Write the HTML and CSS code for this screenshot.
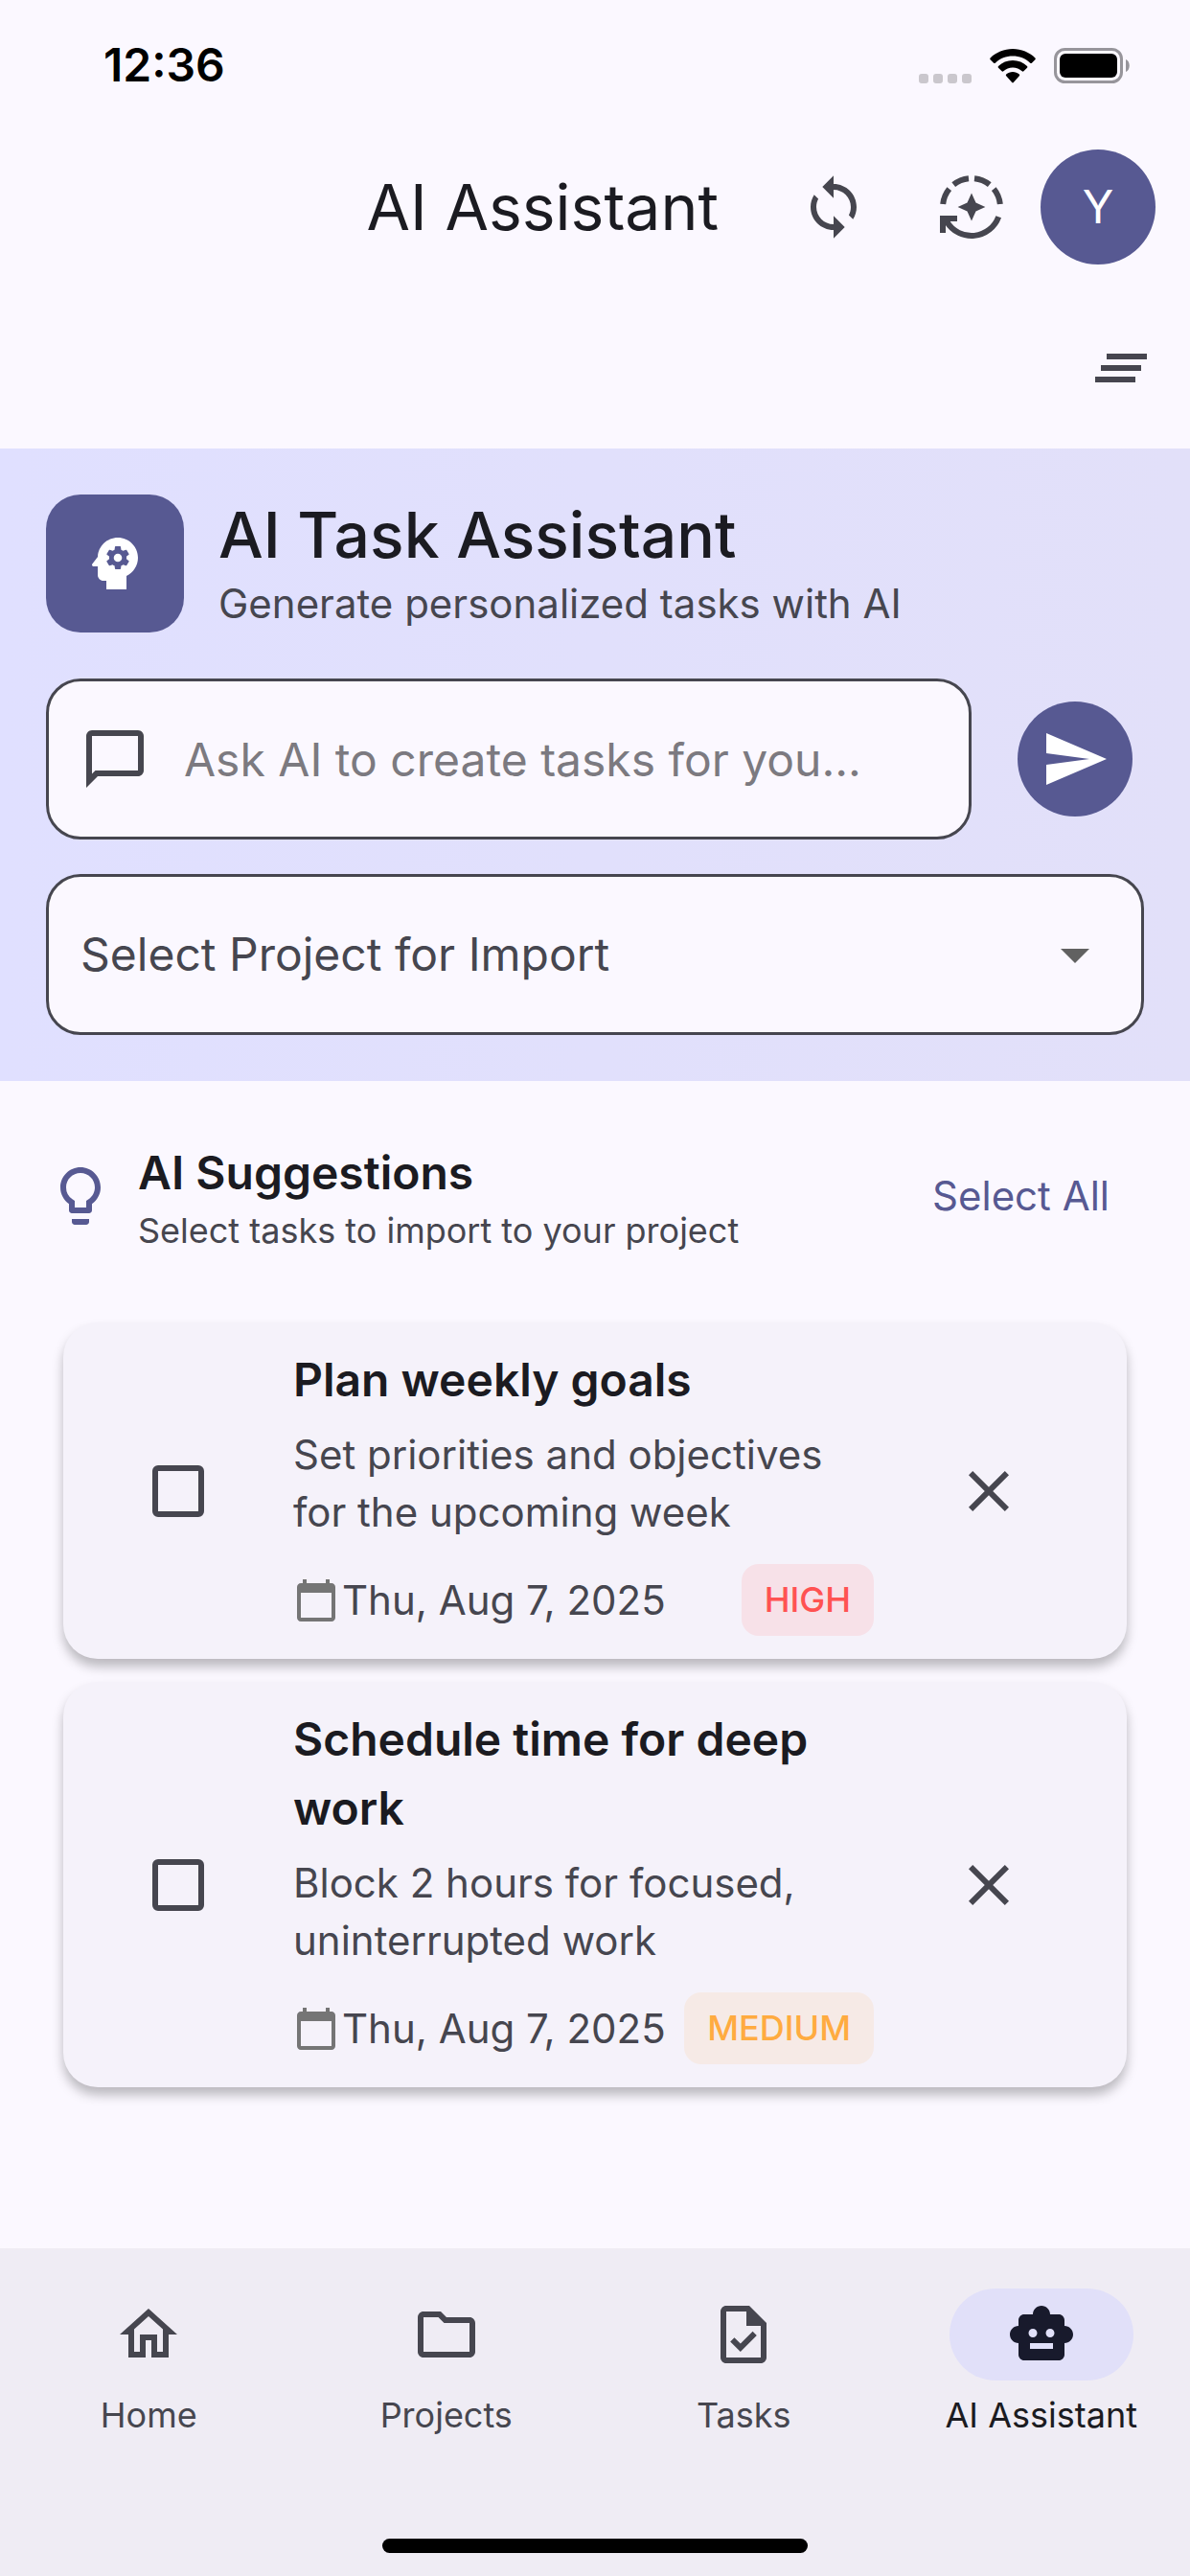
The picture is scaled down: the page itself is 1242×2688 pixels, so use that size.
FILE: index.html
```html
<!DOCTYPE html>
<html lang="en">
<head>
<meta charset="utf-8">
<meta name="viewport" content="width=device-width, initial-scale=1">
<title>AI Assistant</title>
<link rel="stylesheet" href="styles.css">
</head>
<body>
<div class="status-bar">
  <time class="status-time">12:36</time>
  <div class="status-icons">
    <span class="signal"><i></i><i></i><i></i><i></i></span>
    <svg class="wifi" viewBox="0 0 48 36" aria-hidden="true">
      <path d="M24 0C33 0 41.500 3.600 47.400 9.400q.8.900 0 1.800l-3.500 3.500q-.8.800-1.700 0C37.300 10 31 7.500 24 7.500S10.700 10 5.800 14.700q-.9.800-1.700 0L.6 11.200q-.8-.9 0-1.800C6.500 3.600 15 0 24 0z"/>
      <path d="M24 12c5.800 0 11 2.300 15 6q.9.900 0 1.800l-3.600 3.500q-.8.800-1.700 0c-2.600-2.300-6-3.700-9.700-3.700s-7.100 1.400-9.700 3.700q-.9.800-1.700 0L9 19.800q-.9-.9 0-1.800c4-3.700 9.200-6 15-6z"/>
      <path d="M24 24c2.600 0 5 .9 6.800 2.500q.9.800 0 1.700l-6 6.800q-.8.900-1.600 0l-6-6.800q-.9-.9 0-1.700C19 24.900 21.400 24 24 24z"/>
    </svg>
    <svg class="battery" viewBox="0 0 80 37" aria-hidden="true">
      <rect x="1.500" y="1.500" width="69" height="34" rx="10" fill="none" stroke="#97959b" stroke-width="3"/>
      <rect x="6" y="6" width="60" height="25" rx="6"/>
      <path d="M75 12c5 2 5 11 0 13z" fill="#97959b"/>
    </svg>
  </div>
</div>

<header class="app-bar">
  <h1 class="app-title">AI Assistant</h1>
  <button class="icon-button" type="button" aria-label="Sync">
    <svg class="icon" viewBox="0 0 24 24"><path d="M12 4V1.100L8.100 5 12 8.900V6c3.310 0 6 2.690 6 6 0 1.010-.25 1.970-.7 2.800l1.460 1.460C19.540 15.030 20 13.570 20 12c0-4.420-3.580-8-8-8zm0 14c-3.310 0-6-2.690-6-6 0-1.010.25-1.970.7-2.800L5.240 7.740C4.460 8.970 4 10.430 4 12c0 4.420 3.580 8 8 8v2.900l3.900-3.900-3.900-3.900V18z"/></svg>
  </button>
  <button class="icon-button" type="button" aria-label="Regenerate">
    <svg class="icon" viewBox="0 0 24 24">
      <path d="M12 7.200l1.500 3.300 3.300 1.500-3.300 1.500-1.500 3.300-1.500-3.300-3.300-1.500 3.300-1.500zM1 15h6v2H4.700L3 18.500V21H1z"/>
      <g fill="none" stroke="currentColor" stroke-width="2"><path d="M11 2.050A10 10 0 0 0 5.750 4.200M4.250 5.700A10 10 0 0 0 2.060 11M13 2.050A10 10 0 0 1 18.250 4.200M19.750 5.700A10 10 0 0 1 21.940 11M21.400 15.400A10 10 0 0 1 3.450 17.200"/></g>
    </svg>
  </button>
  <button class="avatar" type="button" aria-label="Account">Y</button>
</header>
<div class="tool-row">
  <button class="icon-button tool-button" type="button" aria-label="Clear all">
    <svg class="icon" viewBox="0 0 24 24"><path d="M5 13h14v-2H5v2zm-2 4h14v-2H3v2zM7 7v2h14V7H7z"/></svg>
  </button>
</div>

<main>
  <section class="composer">
    <div class="brand">
      <div class="brand-logo">
        <svg class="icon" viewBox="0 0 24 24" aria-hidden="true"><circle cx="13" cy="10" r="1.430"/><path d="M13 3C9.250 3 6.200 5.940 6.020 9.640L4.100 12.200c-.25.33-.01.8.4.8H6v3c0 1.100.9 2 2 2h1v3h7v-4.680c2.360-1.120 4-3.530 4-6.320 0-3.870-3.130-7-7-7zm3 7c0 .13-.01.26-.02.39l.83.66c.08.06.1.16.05.25l-.8 1.390c-.05.09-.16.12-.24.09l-.99-.4c-.21.16-.43.29-.67.39L14 13.830c-.01.1-.1.17-.2.17h-1.600c-.1 0-.18-.07-.2-.17l-.15-1.060c-.25-.1-.47-.23-.68-.39l-.99.4c-.09.03-.2 0-.25-.09l-.8-1.390c-.05-.08-.03-.19.05-.25l.84-.66c-.01-.13-.02-.26-.02-.39s.02-.27.04-.39l-.85-.66c-.08-.06-.1-.16-.05-.26l.8-1.380c.05-.09.15-.12.24-.09l1 .4c.2-.15.43-.29.67-.39L12 6.170c.02-.1.1-.17.2-.17h1.600c.1 0 .18.07.2.17l.15 1.060c.24.1.46.23.67.39l1-.4c.09-.03.2 0 .24.09l.8 1.380c.05.09.03.2-.05.26l-.85.66c.03.12.04.25.04.39z"/></svg>
      </div>
      <div>
        <h2 class="brand-title">AI Task Assistant</h2>
        <p class="brand-text">Generate personalized tasks with AI</p>
      </div>
    </div>
    <form class="prompt">
      <label class="field prompt-field">
        <svg class="icon" viewBox="0 0 24 24" aria-hidden="true"><path d="M20 2H4c-1.100 0-2 .9-2 2v18l4-4h14c1.100 0 2-.9 2-2V4c0-1.100-.9-2-2-2zm0 14H5.170L4 17.170V4h16v12z"/></svg>
        <input class="prompt-input" type="text" aria-label="Prompt" placeholder="Ask AI to create tasks for you...">
      </label>
      <button class="send" type="button" aria-label="Send">
        <svg class="icon" viewBox="0 0 24 24"><path d="M2.010 21L23 12 2.010 3 2 10l15 2-15 2z"/></svg>
      </button>
    </form>
    <div class="project">
      <select class="field project-select" aria-label="Project">
        <option>Select Project for Import</option>
      </select>
      <svg class="icon project-arrow" viewBox="0 0 24 24" aria-hidden="true"><path d="M7 10l5 5 5-5z"/></svg>
    </div>
  </section>

  <section class="suggestions">
    <div class="suggestions-head">
      <svg class="icon bulb" viewBox="0 0 24 24" aria-hidden="true"><path d="M9 21c0 .55.45 1 1 1h4c.55 0 1-.45 1-1v-1H9v1zm3-19C8.140 2 5 5.140 5 9c0 2.380 1.190 4.470 3 5.740V17c0 .55.45 1 1 1h6c.55 0 1-.45 1-1v-2.260c1.810-1.270 3-3.360 3-5.740 0-3.860-3.140-7-7-7zm2.850 11.100l-.85.6V16h-4v-2.300l-.85-.6A4.997 4.997 0 0 1 7 9c0-2.760 2.240-5 5-5s5 2.240 5 5c0 1.630-.8 3.160-2.150 4.100z"/></svg>
      <div class="suggestions-text">
        <h2 class="list-title">AI Suggestions</h2>
        <p class="list-text">Select tasks to import to your project</p>
      </div>
      <button class="select-all" type="button">Select All</button>
    </div>

    <ul class="cards">
      <li class="card">
        <label class="check"><input type="checkbox" aria-label="Plan weekly goals"></label>
        <div class="card-body">
          <h3 class="list-title">Plan weekly goals</h3>
          <p class="card-text">Set priorities and objectives for the upcoming week</p>
          <div class="card-meta">
            <svg class="calendar" viewBox="0 0 24 24" aria-hidden="true"><path d="M20 3h-1V1h-2v2H7V1H5v2H4c-1.100 0-2 .9-2 2v16c0 1.100.9 2 2 2h16c1.100 0 2-.9 2-2V5c0-1.100-.9-2-2-2zm0 18H4V8h16v13z"/></svg>
            <time datetime="2025-08-07">Thu, Aug 7, 2025</time>
            <span class="chip chip-high">HIGH</span>
          </div>
        </div>
        <button class="icon-button" type="button" aria-label="Dismiss">
          <svg class="icon" viewBox="0 0 24 24"><path d="M19 6.410L17.590 5 12 10.590 6.410 5 5 6.410 10.590 12 5 17.590 6.410 19 12 13.410 17.590 19 19 17.590 13.410 12z"/></svg>
        </button>
      </li>
      <li class="card">
        <label class="check"><input type="checkbox" aria-label="Schedule time for deep work"></label>
        <div class="card-body">
          <h3 class="list-title">Schedule time for deep work</h3>
          <p class="card-text">Block 2 hours for focused, uninterrupted work</p>
          <div class="card-meta">
            <svg class="calendar" viewBox="0 0 24 24" aria-hidden="true"><path d="M20 3h-1V1h-2v2H7V1H5v2H4c-1.100 0-2 .9-2 2v16c0 1.100.9 2 2 2h16c1.100 0 2-.9 2-2V5c0-1.100-.9-2-2-2zm0 18H4V8h16v13z"/></svg>
            <time datetime="2025-08-07">Thu, Aug 7, 2025</time>
            <span class="chip chip-medium">MEDIUM</span>
          </div>
        </div>
        <button class="icon-button" type="button" aria-label="Dismiss">
          <svg class="icon" viewBox="0 0 24 24"><path d="M19 6.410L17.590 5 12 10.590 6.410 5 5 6.410 10.590 12 5 17.590 6.410 19 12 13.410 17.590 19 19 17.590 13.410 12z"/></svg>
        </button>
      </li>
    </ul>
  </section>
</main>

<footer class="bottom-bar">
  <nav class="tabs">
    <a class="tab" href="#home">
      <span class="tab-icon"><svg class="icon" viewBox="0 0 24 24" aria-hidden="true"><path d="M12 3L2 12h3v8h6v-6h2v6h6v-8h3L12 3zm5 15h-2v-6H9v6H7v-7.810l5-4.500 5 4.500V18z"/></svg></span>
      <span>Home</span>
    </a>
    <a class="tab" href="#projects">
      <span class="tab-icon"><svg class="icon" viewBox="0 0 24 24" aria-hidden="true"><path d="M9.170 6l2 2H20v10H4V6h5.170M10 4H4c-1.100 0-1.990.9-1.990 2L2 18c0 1.100.9 2 2 2h16c1.100 0 2-.9 2-2V8c0-1.100-.9-2-2-2h-8l-2-2z"/></svg></span>
      <span>Projects</span>
    </a>
    <a class="tab" href="#tasks">
      <span class="tab-icon"><svg class="icon" viewBox="0 0 24 24" aria-hidden="true"><path d="M14 2H6c-1.100 0-2 .9-2 2v16c0 1.100.89 2 1.990 2H18c1.100 0 2-.9 2-2V8l-6-6zm4 18H6V4h7v5h5v11zM8.820 13.050L7.400 14.460 10.940 18l5.660-5.660-1.410-1.410-4.240 4.240z"/></svg></span>
      <span>Tasks</span>
    </a>
    <a class="tab tab-active" href="#assistant" aria-current="page">
      <span class="tab-icon"><svg class="icon" viewBox="0 0 24 24" aria-hidden="true"><path d="M20 9V7c0-1.100-.9-2-2-2h-3c0-1.660-1.340-3-3-3S9 3.340 9 5H6c-1.100 0-2 .9-2 2v2c-1.660 0-3 1.340-3 3s1.340 3 3 3v4c0 1.100.9 2 2 2h12c1.100 0 2-.9 2-2v-4c1.660 0 3-1.340 3-3s-1.340-3-3-3zM7.500 11.500c0-.83.67-1.500 1.500-1.500s1.500.67 1.500 1.500S9.830 13 9 13s-1.500-.67-1.500-1.500zM16 17H8v-2h8v2zm-1-4c-.83 0-1.500-.67-1.500-1.500S14.170 10 15 10s1.500.67 1.500 1.500S15.830 13 15 13z"/></svg></span>
      <span>AI Assistant</span>
    </a>
  </nav>
  <div class="home-indicator"></div>
</footer>
</body>
</html>
```
FILE: styles.css
```css
:root {
  --surface: #fbf8ff;
  --ink: #1b1b21;
  --muted: #46464f;
  --primary: #575992;
}

* {
  box-sizing: border-box;
}

body {
  margin: 0;
  min-height: 100vh;
  display: flex;
  flex-direction: column;
  background: var(--surface);
  color: var(--muted);
  font-family: Inter, "Liberation Sans", sans-serif;
  font-optical-sizing: none;
  font-size: 42px;
  line-height: 60px;
}

h1, h2, h3, p, ul {
  margin: 0;
  padding: 0;
}

button, input, select {
  font: inherit;
  color: inherit;
  border: 0;
  padding: 0;
  background: none;
}

.icon {
  display: block;
  flex: none;
  width: 72px;
  height: 72px;
  fill: currentColor;
}

/* Status bar */
.status-bar {
  height: 132px;
  padding: 4px 62px 0 108px;
  display: flex;
  align-items: center;
  justify-content: space-between;
}

.status-time {
  color: #000;
  font-size: 48px;
  font-weight: 600;
}

.status-icons {
  display: flex;
  align-items: flex-end;
  gap: 19px;
}

.signal {
  display: flex;
  gap: 5px;
}

.signal i {
  width: 10px;
  height: 10px;
  border-radius: 3px;
  background: #cac7cd;
}

.wifi {
  width: 48px;
  height: 36px;
}

.battery {
  width: 80px;
  height: 37px;
}

/* App bar */
.app-bar {
  height: 168px;
  padding-right: 36px;
  display: flex;
  align-items: center;
  justify-content: flex-end;
}

.app-title {
  margin-right: 48px;
  color: var(--ink);
  font-size: 66px;
  line-height: 84px;
  font-weight: 400;
}

.icon-button {
  flex: none;
  width: 144px;
  height: 144px;
  display: grid;
  place-items: center;
}

.avatar {
  width: 120px;
  height: 120px;
  border-radius: 50%;
  background: var(--primary);
  color: #fff;
  font-size: 48px;
}

.tool-row {
  height: 168px;
  display: flex;
  align-items: center;
  justify-content: flex-end;
}

/* Prompt area */
.composer {
  padding: 48px;
  background: linear-gradient(90deg, #e0e0ff, #e2e0f9);
}

.brand {
  display: flex;
  gap: 36px;
}

.brand-logo {
  width: 144px;
  height: 144px;
  border-radius: 36px;
  display: grid;
  place-items: center;
  background: var(--primary);
  color: #fff;
}

.brand-title {
  color: var(--ink);
  font-size: 66px;
  line-height: 84px;
  font-weight: 500;
}

.prompt {
  margin-top: 48px;
  padding-right: 12px;
  display: flex;
  align-items: center;
  gap: 48px;
}

.field {
  height: 168px;
  border: 3px solid var(--muted);
  border-radius: 36px;
  background: var(--surface);
  font-size: 48px;
}

.prompt-field {
  flex: 1;
  min-width: 0;
  padding: 0 33px;
  display: flex;
  align-items: center;
  gap: 36px;
}

.prompt-input {
  flex: 1;
  min-width: 0;
  height: 72px;
  outline: 0;
}

.prompt-input::placeholder {
  color: #7c7a80;
  opacity: 1;
}

.send {
  flex: none;
  width: 120px;
  height: 120px;
  border-radius: 50%;
  display: grid;
  place-items: center;
  background: var(--primary);
  color: #fff;
}

.project {
  margin-top: 36px;
  display: grid;
  align-items: center;
}

.project-select {
  grid-area: 1 / 1;
  width: 100%;
  padding: 0 108px 0 33px;
  appearance: none;
}

.project-arrow {
  grid-area: 1 / 1;
  justify-self: end;
  margin-right: 36px;
  color: #616161;
  pointer-events: none;
}

/* Suggestions */
.suggestions {
  padding: 48px;
}

.suggestions-head {
  height: 144px;
  display: flex;
  align-items: center;
  gap: 24px;
}

.bulb {
  color: var(--primary);
}

.suggestions-text {
  flex: 1;
}

.list-title {
  color: var(--ink);
  font-size: 48px;
  line-height: 72px;
  font-weight: 600;
}

.list-text {
  font-size: 36px;
  line-height: 48px;
}

.select-all {
  height: 144px;
  padding: 0 36px;
  color: var(--primary);
}

.cards {
  margin-top: 60px;
  padding: 0 18px;
  display: grid;
  gap: 24px;
  list-style: none;
}

.card {
  padding: 24px 72px 24px 48px;
  display: flex;
  align-items: center;
  gap: 48px;
  border-radius: 36px;
  background: #f5f2fa;
  box-shadow: 0 8px 12px rgba(0, 0, 0, 0.26);
}

.check {
  flex: none;
  width: 144px;
  height: 144px;
  display: grid;
  place-items: center;
}

.check input {
  width: 54px;
  height: 54px;
  margin: 0;
  border: 6px solid var(--muted);
  border-radius: 6px;
  appearance: none;
}

.card-body {
  flex: 1;
  min-width: 0;
}

.card-text {
  margin-top: 12px;
}

.card-meta {
  margin-top: 24px;
  display: flex;
  align-items: center;
  gap: 3px;
}

.calendar {
  flex: none;
  width: 48px;
  height: 48px;
  fill: #757575;
}

.chip {
  margin-left: auto;
  padding: 12px 24px;
  border-radius: 18px;
  font-size: 36px;
  line-height: 51px;
  font-weight: 500;
}

.chip-high {
  background: #f7e1e8;
  color: #ff5252;
}

.chip-medium {
  background: #f6eae6;
  color: #ffab40;
}

/* Bottom navigation */
.bottom-bar {
  margin-top: auto;
  padding: 42px 0 24px;
  background: #efecf4;
}

.tabs {
  display: flex;
}

.tab {
  flex: 1 1 0;
  display: flex;
  flex-direction: column;
  align-items: center;
  gap: 12px;
  color: var(--muted);
  font-size: 36px;
  line-height: 48px;
  text-decoration: none;
}

.tab-icon {
  width: 192px;
  height: 96px;
  border-radius: 48px;
  display: grid;
  place-items: center;
}

.tab-active {
  color: var(--ink);
}

.tab-active .tab-icon {
  background: #e1e0f9;
  color: #181a2c;
}

.home-indicator {
  width: 444px;
  height: 15px;
  margin: 105px auto 0;
  border-radius: 8px;
  background: #000;
}
```
